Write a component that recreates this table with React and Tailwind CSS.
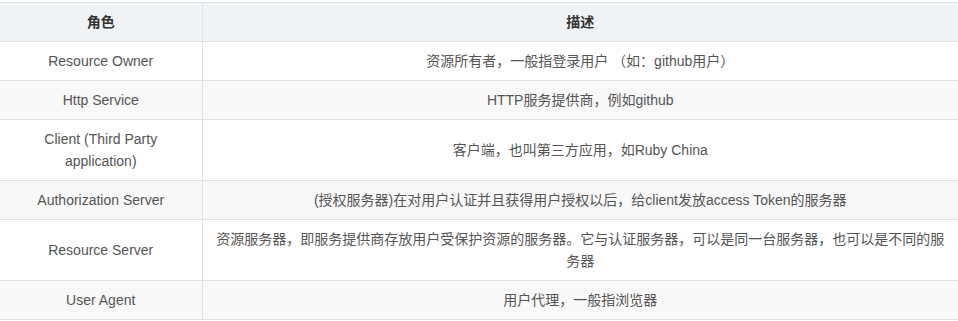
const ROWS = [
  ['Resource Owner', '资源所有者，一般指登录用户 （如：github用户）'],
  ['Http Service', 'HTTP服务提供商，例如github'],
  ['Client (Third Party application)', '客户端，也叫第三方应用，如Ruby China'],
  ['Authorization Server', '(授权服务器)在对用户认证并且获得用户授权以后，给client发放access Token的服务器'],
  ['Resource Server', '资源服务器，即服务提供商存放用户受保护资源的服务器。它与认证服务器，可以是同一台服务器，也可以是不同的服务器'],
  ['User Agent', '用户代理，一般指浏览器'],
]

export default function App() {
  return (
    <div className="w-[958px] h-[321px] bg-white overflow-hidden pt-[2px] font-['Liberation_Sans','Noto_Sans_CJK_SC',sans-serif] text-[14px] leading-[22px]">
      <table className="w-[958px] border-collapse table-fixed">
        <colgroup>
          <col className="w-[202px]" />
          <col />
        </colgroup>
        <thead>
          <tr className="bg-[#f0f3f6]">
            <th className="border-y border-r border-[#dfe2e5] px-[15px] py-[8px] font-bold text-[#333] text-center">角色</th>
            <th className="border-y border-[#dfe2e5] px-[10px] py-[8px] font-bold text-[#333] text-center">描述</th>
          </tr>
        </thead>
        <tbody>
          {ROWS.map(([role, desc], i) => (
            <tr key={role} className={i % 2 ? 'bg-[#f8f8f8]' : 'bg-white'}>
              <td className="border-b border-r border-[#dfe2e5] px-[15px] py-[8px] text-[#555] text-center">{role}</td>
              <td className="border-b border-[#dfe2e5] px-[10px] py-[8px] text-[#555] text-center">{desc}</td>
            </tr>
          ))}
        </tbody>
      </table>
    </div>
  )
}
